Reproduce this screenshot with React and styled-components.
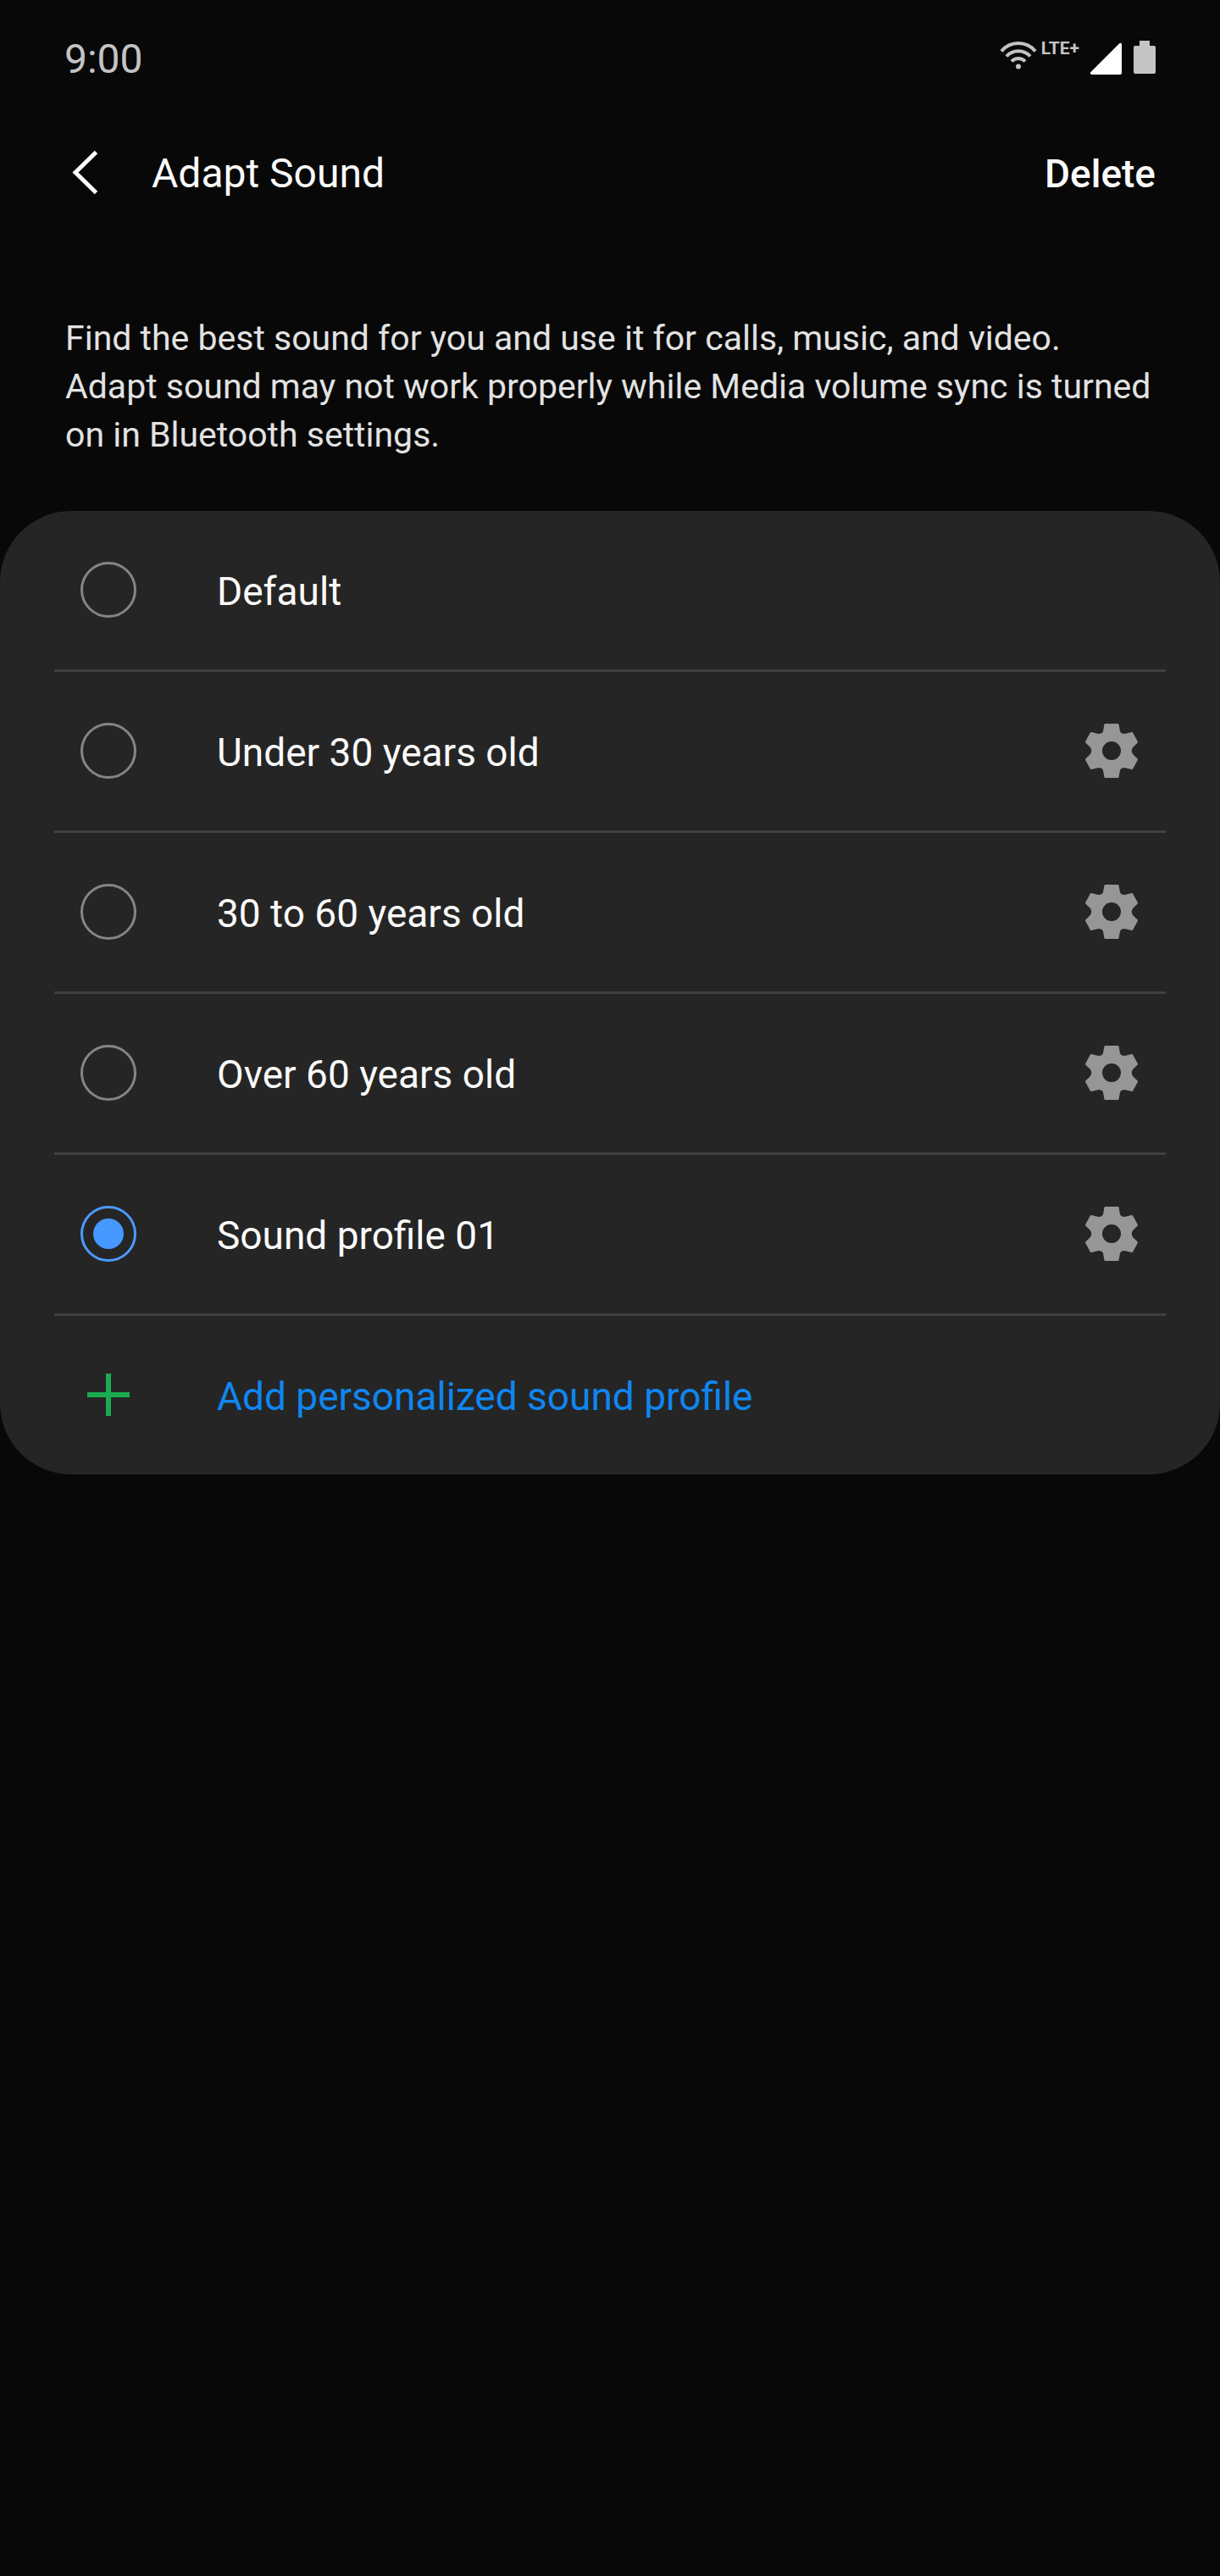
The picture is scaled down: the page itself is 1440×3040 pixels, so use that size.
import React, { useState } from "react";
import styled, { createGlobalStyle } from "styled-components";

const GlobalStyle = createGlobalStyle`
  * {
    box-sizing: border-box;
  }

  body {
    margin: 0;
    background: #080808;
    color: #fafafa;
    font-family: Roboto, "Liberation Sans", sans-serif;
  }

  button {
    padding: 0;
    border: 0;
    background: none;
    color: inherit;
    font-family: inherit;
    cursor: pointer;
  }
`;

const Screen = styled.div`
  min-height: 100vh;
  background: #080808;
`;

const StatusBar = styled.div`
  display: flex;
  justify-content: space-between;
  align-items: flex-start;
  padding: 48px 76px 0;
`;

const Clock = styled.time`
  color: #c4c4c4;
  font-size: 48px;
  line-height: 44px;
`;

const StatusIcons = styled.div`
  display: flex;
  align-items: flex-start;

  svg {
    display: block;
  }
`;

const Network = styled.span`
  margin: 0 12px 0 5px;
  color: #c4c4c4;
  font-size: 21px;
  font-weight: 700;
  line-height: 18px;
`;

const Signal = styled.svg`
  margin-right: 12px;
`;

const Header = styled.header`
  display: flex;
  align-items: center;
  padding: 84px 76px 0;
`;

const BackButton = styled.button`
  width: 48px;
  margin-right: 55px;

  svg {
    display: block;
  }
`;

const Title = styled.h1`
  flex: 1;
  margin: 0;
  font-size: 48px;
  font-weight: 400;
  line-height: 58px;
`;

const DeleteButton = styled.button`
  font-size: 46px;
  font-weight: 500;
  line-height: 58px;
`;

const Intro = styled.p`
  margin: 0;
  padding: 137px 76px 61px 77px;
  color: #e2e2e2;
  font-size: 41px;
  line-height: 57px;
`;

const Card = styled.ul`
  margin: 0;
  padding: 0 64px;
  border-radius: 84px;
  background: #252525;
  list-style: none;
`;

const Row = styled.li`
  display: flex;
  align-items: center;
  min-height: 187px;
  padding: 0 32px 2px 31px;

  & + & {
    min-height: 190px;
    border-top: 3px solid #404040;
  }
`;

const Option = styled.label`
  flex: 1;
  display: flex;
  align-items: center;
  gap: 95px;
  cursor: pointer;
`;

const Radio = styled.input`
  appearance: none;
  display: grid;
  place-items: center;
  width: 66px;
  height: 66px;
  margin: 0;
  border: 3px solid #858585;
  border-radius: 50%;

  &:checked {
    border-color: #4b9bff;
  }

  &:checked::before {
    content: "";
    width: 36px;
    height: 36px;
    border-radius: 50%;
    background: #4599ff;
  }
`;

const RowText = styled.span`
  padding-top: 4px;
  font-size: 46px;
  line-height: 54px;
`;

const SettingsButton = styled.button`
  color: #969696;

  svg {
    display: block;
  }
`;

const AddButton = styled.button`
  flex: 1;
  display: flex;
  align-items: center;
  gap: 95px;
  color: #0f86f0;
  text-align: left;
`;

const WifiIcon = () => (
  <svg width="44" height="40" viewBox="0 0 44 40" fill="none" stroke="#c4c4c4" strokeWidth="4" aria-hidden="true">
    <path d="M2 12.5A26 26 0 0 1 42 12.5" />
    <path d="M8 18.5A19 19 0 0 1 36 18.5" />
    <path d="M14 24.5A11 11 0 0 1 30 24.5" />
    <circle cx="22" cy="30.5" r="3" fill="#c4c4c4" stroke="none" />
  </svg>
);

const SignalIcon = () => (
  <Signal width="40" height="40" viewBox="0 0 40 40" aria-hidden="true">
    <path d="M35.5 3Q38 2 38 4.5V38Q38 40 36 40H3Q0.5 40 1 37.5Z" fill="#fff" />
  </Signal>
);

const BatteryIcon = () => (
  <svg width="26" height="40" viewBox="0 0 26 40" fill="#c4c4c4" aria-hidden="true">
    <path d="M7 0H19V6H24Q26 6 26 8V37Q26 39 24 39H2Q0 39 0 37V8Q0 6 2 6H7Z" />
  </svg>
);

const BackIcon = () => (
  <svg width="48" height="58" viewBox="0 0 48 58" fill="none" stroke="#fafafa" strokeWidth="5" aria-hidden="true">
    <path d="M37.5 3.5L13 27.5L37.5 51.5" />
  </svg>
);

const GearIcon = () => (
  <svg width="64" height="64" viewBox="0 0 64 64" fill="currentColor" aria-hidden="true">
    <path
      fillRule="evenodd"
      d="M24.5 0H39.5Q40.4 0 40.6 1L42 9Q43 12 47.5 12L55.8 10Q56.7 9.8 57.2 10.7L62.8 21Q63.2 22 62.5 22.7L57.3 27.7Q54.2 32 57.3 36.3L62.5 41.3Q63.2 42 62.8 43L57.2 53.3Q56.7 54.2 55.8 54L47.5 52Q43 52 42 55L40.6 63Q40.4 64 39.5 64H24.5Q23.6 64 23.4 63L22 55Q21 52 16.5 52L8.2 54Q7.3 54.2 6.8 53.3L1.2 43Q0.8 42 1.5 41.3L6.7 36.3Q9.8 32 6.7 27.7L1.5 22.7Q0.8 22 1.2 21L6.8 10.7Q7.3 9.8 8.2 10L16.5 12Q21 12 22 9L23.4 1Q23.6 0 24.5 0ZM32 21A11 11 0 1 0 32 43A11 11 0 1 0 32 21Z"
    />
  </svg>
);

const PlusIcon = () => (
  <svg width="66" height="66" viewBox="0 0 66 66" stroke="#1aab50" strokeWidth="6" aria-hidden="true">
    <path d="M33 8V58M8 33H58" />
  </svg>
);

const profiles = [
  { id: "default", name: "Default" },
  { id: "under-30", name: "Under 30 years old", editable: true },
  { id: "30-to-60", name: "30 to 60 years old", editable: true },
  { id: "over-60", name: "Over 60 years old", editable: true },
  { id: "profile-01", name: "Sound profile 01", editable: true },
];

const App = () => {
  const [selected, setSelected] = useState("profile-01");

  return (
    <Screen>
      <GlobalStyle />
      <StatusBar>
        <Clock>9:00</Clock>
        <StatusIcons>
          <WifiIcon />
          <Network>LTE+</Network>
          <SignalIcon />
          <BatteryIcon />
        </StatusIcons>
      </StatusBar>
      <Header>
        <BackButton type="button" aria-label="Back">
          <BackIcon />
        </BackButton>
        <Title>Adapt Sound</Title>
        <DeleteButton type="button">Delete</DeleteButton>
      </Header>
      <main>
        <Intro>
          Find the best sound for you and use it for calls, music, and video.
          Adapt sound may not work properly while Media volume sync is turned
          on in Bluetooth settings.
        </Intro>
        <Card>
          {profiles.map((profile) => (
            <Row key={profile.id}>
              <Option htmlFor={profile.id}>
                <Radio
                  type="radio"
                  id={profile.id}
                  name="profile"
                  checked={selected === profile.id}
                  onChange={() => setSelected(profile.id)}
                />
                <RowText>{profile.name}</RowText>
              </Option>
              {profile.editable && (
                <SettingsButton type="button" aria-label={`${profile.name} settings`}>
                  <GearIcon />
                </SettingsButton>
              )}
            </Row>
          ))}
          <Row>
            <AddButton type="button">
              <PlusIcon />
              <RowText>Add personalized sound profile</RowText>
            </AddButton>
          </Row>
        </Card>
      </main>
    </Screen>
  );
};

export default App;
